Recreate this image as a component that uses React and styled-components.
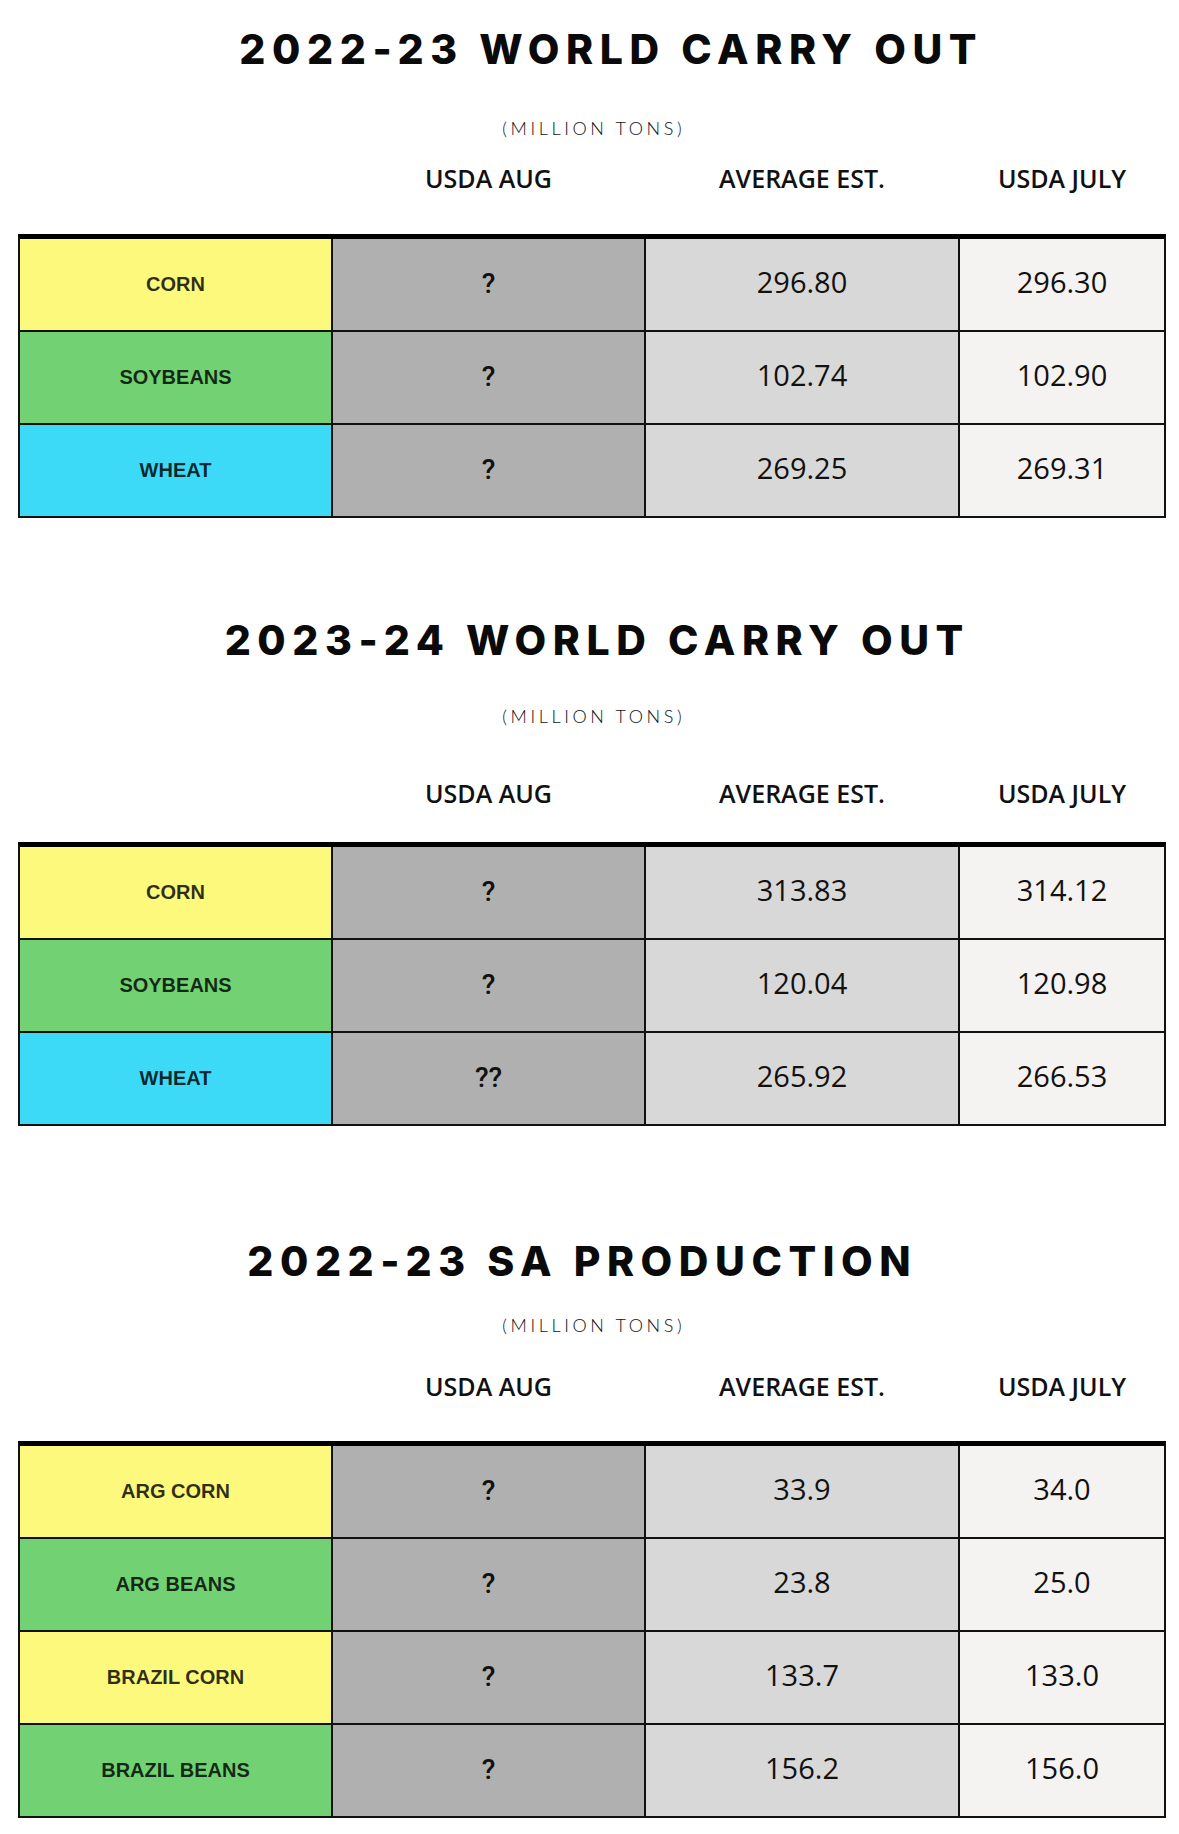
import React from "react";
import styled, { createGlobalStyle } from "styled-components";

// column widths inside the 2px grid lines so the lines land at 332 / 645 / 959
const COLS = "311px 311px 312px 204px";

const COLORS = {
  corn: "#fdf97c",
  beans: "#72d173",
  wheat: "#3cdaf6",
  aug: "#b0b0b0",
  avg: "#d8d8d8",
  july: "#f5f3f2"
};

const sections = [
  {
    title: "2022-23 WORLD CARRY OUT",
    shift: 16,
    gaps: [28, 48, 25, 41],
    rows: [
      { label: "CORN", color: COLORS.corn, aug: "?", avg: "296.80", july: "296.30" },
      { label: "SOYBEANS", color: COLORS.beans, aug: "?", avg: "102.74", july: "102.90" },
      { label: "WHEAT", color: COLORS.wheat, aug: "?", avg: "269.25", july: "269.31" }
    ]
  },
  {
    title: "2023-24 WORLD CARRY OUT",
    shift: 2,
    gaps: [101, 45, 52, 34],
    rows: [
      { label: "CORN", color: COLORS.corn, aug: "?", avg: "313.83", july: "314.12" },
      { label: "SOYBEANS", color: COLORS.beans, aug: "?", avg: "120.04", july: "120.98" },
      { label: "WHEAT", color: COLORS.wheat, aug: "??", avg: "265.92", july: "266.53" }
    ]
  },
  {
    title: "2022-23 SA PRODUCTION",
    shift: -13,
    gaps: [114, 33, 36, 40],
    rows: [
      { label: "ARG CORN", color: COLORS.corn, aug: "?", avg: "33.9", july: "34.0" },
      { label: "ARG BEANS", color: COLORS.beans, aug: "?", avg: "23.8", july: "25.0" },
      { label: "BRAZIL CORN", color: COLORS.corn, aug: "?", avg: "133.7", july: "133.0" },
      { label: "BRAZIL BEANS", color: COLORS.beans, aug: "?", avg: "156.2", july: "156.0" }
    ]
  }
];

const App = () => (
  <>
    <GlobalStyle />
    <StyledPage>
      {sections.map((s) => (
        <StyledSection key={s.title} $top={s.gaps[0]}>
          <StyledTitle $shift={s.shift}>{s.title}</StyledTitle>
          <StyledSubtitle $gap={s.gaps[1]}>(MILLION TONS)</StyledSubtitle>
          <StyledHeader $gap={s.gaps[2]}>
            <span />
            <span>USDA AUG</span>
            <span>AVERAGE EST.</span>
            <span>USDA JULY</span>
          </StyledHeader>
          <StyledTable $gap={s.gaps[3]}>
            {s.rows.map((r) => (
              <React.Fragment key={r.label}>
                <StyledLabel $bg={r.color}>{r.label}</StyledLabel>
                <StyledQuestion $bg={COLORS.aug}>{r.aug}</StyledQuestion>
                <StyledNumber $bg={COLORS.avg}>{r.avg}</StyledNumber>
                <StyledNumber $bg={COLORS.july}>{r.july}</StyledNumber>
              </React.Fragment>
            ))}
          </StyledTable>
        </StyledSection>
      ))}
    </StyledPage>
  </>
);

const GlobalStyle = createGlobalStyle`
body {
  margin: 0;
  background: #ffffff;
  color: #111111;
}
`;

const StyledPage = styled.div`
width: 1179px;
height: 1834px;
box-sizing: border-box;
padding: 0 13px 0 18px;
background: #ffffff;
overflow: hidden;
`;

const StyledSection = styled.section`
display: flex;
flex-direction: column;
padding-top: ${(p) => p.$top}px;
`;

const StyledTitle = styled.h1`
margin: 0;
text-align: center;
font-family: Inter, "Liberation Sans", sans-serif;
font-weight: 800;
font-size: 41px;
line-height: 42px;
letter-spacing: 0.16em;
padding-left: calc(0.16em + ${(p) => Math.max(p.$shift, 0) * 2}px);
padding-right: ${(p) => Math.max(-p.$shift, 0) * 2}px;
color: #0a0a0a;
`;

const StyledSubtitle = styled.div`
margin-top: ${(p) => p.$gap}px;
text-align: center;
font-family: Lato, "Liberation Sans", sans-serif;
font-weight: 300;
font-size: 18px;
line-height: 20px;
letter-spacing: 0.2em;
padding-left: 0.2em;
color: #111111;
`;

const StyledHeader = styled.div`
margin-top: ${(p) => p.$gap}px;
display: grid;
grid-template-columns: ${COLS};
column-gap: 2px;
padding: 0 2px;
span {
  text-align: center;
  font-family: "Open Sans", "Liberation Sans", sans-serif;
  font-weight: 600;
  font-size: 25px;
  line-height: 30px;
  color: #111111;
}
`;

const StyledTable = styled.div`
margin-top: ${(p) => p.$gap}px;
display: grid;
grid-template-columns: ${COLS};
grid-auto-rows: 91px;
gap: 2px;
background: #111111;
border: 2px solid #111111;
border-top: 5px solid #000000;
`;

const StyledCell = styled.div`
display: flex;
align-items: center;
justify-content: center;
background: ${(p) => p.$bg};
`;

const StyledLabel = styled(StyledCell)`
font-family: "Liberation Sans", Arial, sans-serif;
font-weight: 700;
font-size: 20px;
color: rgba(0, 0, 0, 0.82);
`;

const StyledQuestion = styled(StyledCell)`
font-family: Roboto, "Liberation Sans", sans-serif;
font-weight: 500;
font-size: 28px;
color: #111111;
padding-bottom: 2px;
`;

const StyledNumber = styled(StyledCell)`
font-family: "Open Sans", "Liberation Sans", sans-serif;
font-weight: 400;
font-size: 29px;
color: #111111;
padding-bottom: 6px;
`;

export default App;
